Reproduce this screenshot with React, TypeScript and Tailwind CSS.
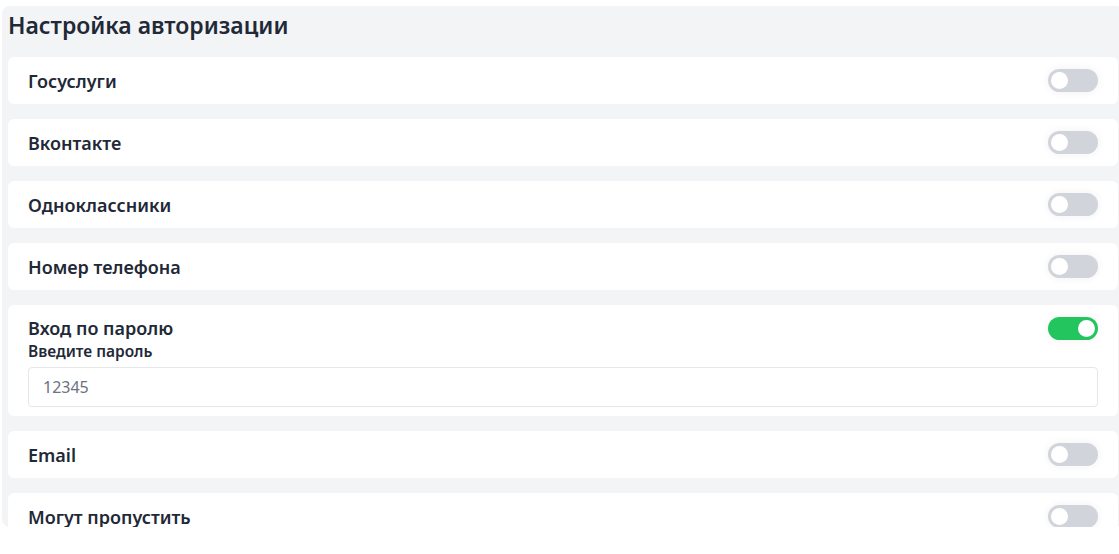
import { useState } from "react";

type Item = { id: string; label: string; on: boolean };

const items: Item[] = [
  { id: "gos", label: "Госуслуги", on: false },
  { id: "vk", label: "Вконтакте", on: false },
  { id: "ok", label: "Одноклассники", on: false },
  { id: "phone", label: "Номер телефона", on: false },
  { id: "password", label: "Вход по паролю", on: true },
  { id: "email", label: "Email", on: false },
  { id: "skip", label: "Могут пропустить", on: false },
];

function Toggle({ on, onClick }: { on: boolean; onClick: () => void }) {
  return (
    <button
      type="button"
      onClick={onClick}
      className={`relative flex h-[23px] w-[50px] shrink-0 items-center rounded-full px-[3px] shadow-[0_0_10px_rgba(0,0,0,0.06)] transition-colors ${
        on ? "justify-end bg-[#22c55e]" : "justify-start bg-[#d1d5db]"
      }`}
    >
      <span className="block h-[17px] w-[17px] rounded-full bg-white" />
    </button>
  );
}

export default function App() {
  const [state, setState] = useState<Record<string, boolean>>(
    Object.fromEntries(items.map((i) => [i.id, i.on]))
  );
  const flip = (id: string) => setState((s) => ({ ...s, [id]: !s[id] }));

  return (
    <div
      className="h-[554px] overflow-hidden bg-white pl-[2px] pt-[6px] text-[#1f2937]"
      style={{ fontFamily: '"Noto Sans", "Open Sans", sans-serif' }}
    >
      <div className="h-[521px] w-[1122px] overflow-hidden rounded-lg bg-[#f3f4f6] px-[6px]">
        {/* Header */}
        <h1 className="pb-[16px] pt-[4px] text-[23px] font-semibold leading-[31px]">
          Настройка авторизации
        </h1>

        {/* Providers */}
        <div className="flex flex-col gap-[15px]">
          {items.map((item) =>
            item.id === "password" ? (
              <div key={item.id} className="rounded-md bg-white px-5 pb-[9px] pt-[11px]">
                <div className="flex items-center justify-between">
                  <span className="text-[18px] font-semibold leading-6">{item.label}</span>
                  <Toggle on={state[item.id]} onClick={() => flip(item.id)} />
                </div>
                <label className="mt-[1px] block text-[15.5px] font-semibold leading-5">
                  Введите пароль
                </label>
                <input
                  defaultValue="12345"
                  className="mt-[6px] h-[40px] w-full rounded border border-[#e5e7eb] px-[14px] text-[16px] text-[#6b7280] outline-none"
                />
              </div>
            ) : (
              <div
                key={item.id}
                className="flex h-[47px] shrink-0 items-center justify-between rounded-md bg-white px-5"
              >
                <span className="text-[18px] font-semibold leading-6">{item.label}</span>
                <Toggle on={state[item.id]} onClick={() => flip(item.id)} />
              </div>
            )
          )}
        </div>
      </div>
    </div>
  );
}
